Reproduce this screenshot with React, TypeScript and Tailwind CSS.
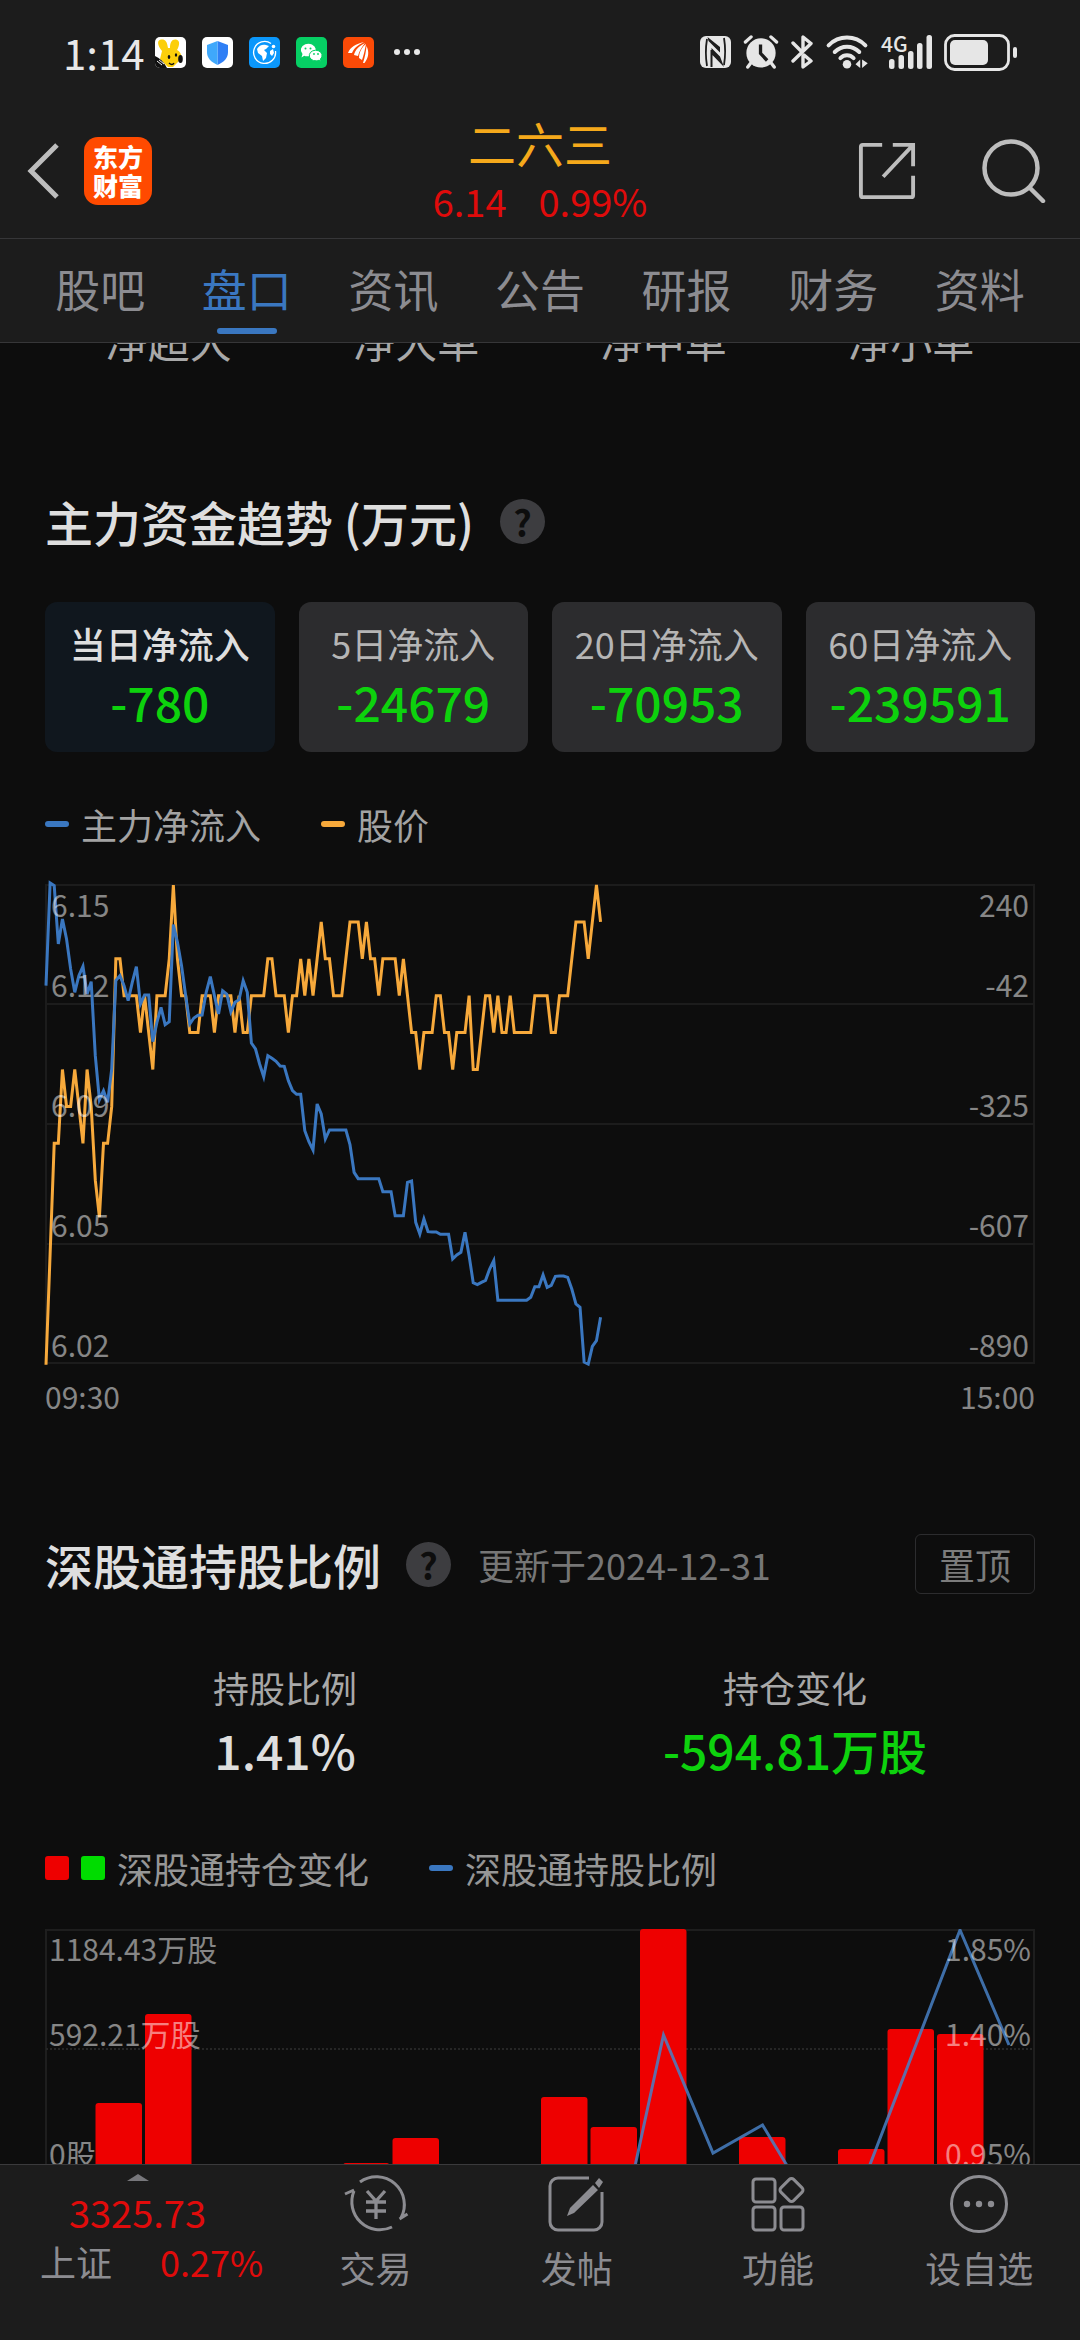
import type { ReactNode } from "react";

const tabs = ["股吧", "盘口", "资讯", "公告", "研报", "财务", "资料"];

const orderSizes = ["净超大", "净大单", "净中单", "净小单"];

const inflows = [
  { label: "当日净流入", value: "-780", active: true },
  { label: "5日净流入", value: "-24679", active: false },
  { label: "20日净流入", value: "-70953", active: false },
  { label: "60日净流入", value: "-239591", active: false },
];

// Minute prices, in cents below 6.15.
const priceTicks = [
  13, 10, 7, 7, 5, 6, 6, 5, 6, 7, 5, 6, 8, 9, 7, 7, 6, 2, 2, 3, 3, 3, 3, 4, 3, 4, 5, 3, 3, 3, 2, 0, 2, 3, 3, 4,
  4, 4, 3, 3, 3, 4, 3, 3, 3, 3, 4, 3, 4, 4, 3, 3, 3, 3, 2, 2, 3, 3, 3, 4, 3, 3, 2, 3, 2, 3, 2, 1, 2, 2, 3, 3, 3,
  2, 1, 1, 1, 2, 1, 2, 2, 3, 2, 2, 2, 2, 3, 2, 3, 4, 4, 5, 4, 4, 4, 3, 3, 4, 4, 5, 4, 4, 4, 3, 5, 5, 4, 3, 3, 4,
  3, 4, 4, 3, 4, 4, 4, 4, 4, 3, 3, 3, 3, 4, 4, 3, 3, 3, 2, 1, 1, 1, 2, 1, 0, 1,
];

// Minute main-force flow, on a scale whose range is 75 (240) to 1515 (-890).
const flowTicks = [
  380, 72, 80, 255, 180, 240, 330, 400, 350, 322, 405, 368, 590, 722, 695, 730, 630, 365, 350, 380, 425, 370, 323,
  435, 408, 408, 548, 490, 445, 497, 488, 197, 250, 320, 410, 495, 477, 469, 468, 400, 353, 410, 465, 395, 405, 458,
  430, 422, 365, 400, 552, 570, 615, 653, 590, 598, 607, 621, 622, 665, 695, 706, 706, 815, 848, 873, 735, 765, 840,
  813, 813, 813, 813, 813, 857, 940, 959, 959, 959, 959, 959, 959, 998, 998, 998, 1070, 1070, 1070, 970, 966, 1090,
  1125, 1080, 1118, 1119, 1119, 1126, 1126, 1126, 1200, 1188, 1180, 1120, 1190, 1271, 1277, 1270, 1264, 1230, 1205,
  1324, 1324, 1324, 1324, 1324, 1324, 1324, 1324, 1315, 1283, 1283, 1248, 1285, 1279, 1252, 1251, 1251, 1255, 1290,
  1335, 1345, 1509, 1515, 1462, 1445, 1375,
];

const minuteStep = 990 / 241;
const pricePoints = priceTicks.map((t, i) => `${i * minuteStep + 1},${t * 36.9 + 1}`).join(" ");
const flowPoints = flowTicks.map((t, i) => `${i * minuteStep + 1},${t / 3 - 25}`).join(" ");

const holdingBars = [
  { slot: 1, top: 174 },
  { slot: 2, top: 85 },
  { slot: 6, top: 234 },
  { slot: 7, top: 209 },
  { slot: 10, top: 168 },
  { slot: 11, top: 198 },
  { slot: 12, top: 0 },
  { slot: 14, top: 208 },
  { slot: 16, top: 220 },
  { slot: 17, top: 100 },
  { slot: 18, top: 105 },
];

function StatusIcons() {
  return (
    <div className="flex items-center gap-4">
      <svg className="size-[31px]" viewBox="0 0 31 31" aria-hidden="true">
        <clipPath id="tile">
          <rect width="31" height="31" rx="5" />
        </clipPath>
        <g clipPath="url(#tile)">
          <rect width="31" height="31" fill="#fff" />
          <path d="M7 14C2 8 2 3 6 2.500S12 4 13 11h2c0-6 2-9 6-8.500S25 8 22 13c4 2 5 6 4 9l-8 8h-5L5 22Z" fill="#fccf0b" />
          <path d="M0 19c5 2 9 6 12 12H0Z" fill="#111" />
          <path d="M2 24l5 4M4 23l5 4" stroke="#eee" strokeWidth="1" />
          <ellipse cx="25.500" cy="22" rx="2.300" ry="4" fill="#111" />
          <ellipse cx="14" cy="20" rx="1.300" ry="1.900" fill="#111" />
          <ellipse cx="21" cy="18" rx="1.200" ry="1.700" fill="#111" />
          <path d="M14 26c2 2 4 2 5 0" stroke="#111" strokeWidth="1.300" fill="none" />
        </g>
      </svg>
      <svg className="size-[31px]" viewBox="0 0 31 31" aria-hidden="true">
        <rect width="31" height="31" rx="5" fill="#fff" />
        <path d="M15.500 4l10.500 4v7c0 6-4 10-10.500 13Z" fill="#2f7ff5" />
        <path d="M15.500 4L5 8v7c0 6 4 10 10.500 13Z" fill="#3fa8fb" />
      </svg>
      <svg className="size-[31px]" viewBox="0 0 31 31" aria-hidden="true">
        <rect width="31" height="31" rx="5" fill="#0b97fb" />
        <path d="M22 6.500A11 11 0 1 0 26.500 14" fill="none" stroke="#fff" strokeWidth="1.300" />
        <path d="M8 12c2-4 6-5 9-4l3 1-3 3-2 1 3 3-1 5-3 3-1-5-4-3Z" fill="#fff" />
        <path d="M21 14l3-2 1 4-2 3-2-2Z" fill="#fff" />
        <circle cx="24.500" cy="9.500" r="1.800" fill="#fff" />
      </svg>
      <svg className="size-[31px]" viewBox="0 0 31 31" aria-hidden="true">
        <rect width="31" height="31" rx="5" fill="#06cf64" />
        <path d="M5.500 20.500l1-3.500a7.500 6.300 0 1 1 5 2.300c-1.500 0-2.500-.3-3.300-.6Z" fill="#fff" />
        <path d="M25 24.500l-.6-2.400a6.400 5.300 0 1 0-4 1.700c1.200 0 2-.2 2.700-.6Z" fill="#fff" stroke="#06cf64" strokeWidth="1" />
        <circle cx="9.500" cy="11.500" r="1" fill="#06cf64" />
        <circle cx="14.500" cy="11.500" r="1" fill="#06cf64" />
        <circle cx="18" cy="17" r=".9" fill="#06cf64" />
        <circle cx="22" cy="17" r=".9" fill="#06cf64" />
      </svg>
      <svg className="size-[31px]" viewBox="0 0 31 31" aria-hidden="true">
        <rect width="31" height="31" rx="5" fill="#fa4a07" />
        <path d="M5 16C7 10 13 7 21 5 15 8 11 11 9 16Z" fill="#fff" />
        <path d="M11 18c1-5 5-9 11-12-3 4-6 8-7 13Z" fill="#fff" />
        <path d="M16 21c0-6 3-11 7-14-1 5-2 10-4 16Z" fill="#fff" />
        <path d="M20 26c2-6 3-12 3.500-17 3 6 2 12-2 17Z" fill="#fff" />
      </svg>
      <svg className="ml-1 h-2 w-[28px]" viewBox="0 0 28 8" fill="#e8e8e8" aria-hidden="true">
        <circle cx="3" cy="4" r="3" />
        <circle cx="13" cy="4" r="3" />
        <circle cx="23" cy="4" r="3" />
      </svg>
    </div>
  );
}

function SystemIcons() {
  return (
    <div className="flex items-center gap-3 text-[#e6e6e6]">
      <svg className="h-8 w-[31px]" viewBox="0 0 31 32" aria-hidden="true">
        <rect width="31" height="32" rx="6" fill="currentColor" />
        <path d="M7 3c-1.500 9-1.500 18 0 27M24 2c1.500 9 1.500 18 0 27" stroke="#1c1c1c" strokeWidth="1.800" fill="none" />
        <path d="M7.500 1L20 11V16.500L8.500 5ZM11.500 12L20 20.500 24 31 11.500 18ZM10.500 14h2v17h-2Z" fill="#1c1c1c" />
      </svg>
      <svg className="h-[34px] w-9" viewBox="0 0 36 36" aria-hidden="true">
        <circle cx="18" cy="19" r="15.500" fill="currentColor" />
        <path d="M1.500 7.500l6-5.500M34.500 7.500l-6-5.500M7 30l-3 4M29 30l3 4" stroke="currentColor" strokeWidth="3.500" strokeLinecap="round" />
        <path d="M17.500 10v9.500l7 7.500" stroke="#1c1c1c" strokeWidth="3.500" fill="none" />
      </svg>
      <svg className="h-[34px] w-[22px]" viewBox="0 0 22 34" fill="none" stroke="currentColor" strokeWidth="3.400" strokeLinecap="round" strokeLinejoin="round" aria-hidden="true">
        <path d="M2 8l9 9M2 26l18-17.500L12 2v12M12 21v11l8-6-7-6" />
      </svg>
      <svg className="h-[34px] w-11" viewBox="0 0 44 36" fill="none" stroke="currentColor" strokeWidth="4.200" strokeLinecap="round" aria-hidden="true">
        <path d="M2.500 11c11-11 28-11 39 0M9 18c7.500-7.500 18.500-7.500 26 0M15 24.500c4-4 10-4 14 0" />
        <circle cx="22" cy="31" r="4.500" fill="currentColor" stroke="none" />
        <path d="M36 26v9l-5-4ZM38 35v-9l6 4Z" fill="currentColor" stroke="none" />
      </svg>
      <div className="relative h-[34px] w-[51px]">
        <span className="absolute top-0 left-0 text-[21px] leading-[16px] font-medium">4G</span>
        <svg className="size-full" viewBox="0 0 51 34" fill="currentColor" aria-hidden="true">
          <rect x="8" y="24" width="5.500" height="10" rx="2.500" />
          <rect x="17.500" y="20" width="5.500" height="14" rx="2.500" />
          <rect x="27" y="16" width="5.500" height="18" rx="2.500" />
          <rect x="36" y="8" width="5.500" height="26" rx="2.500" />
          <rect x="45.500" y="0" width="5.500" height="34" rx="2.500" />
        </svg>
      </div>
      <svg className="h-[37px] w-[73px]" viewBox="0 0 73 37" aria-hidden="true">
        <rect x="1.500" y="1.500" width="63" height="34" rx="9" fill="none" stroke="currentColor" strokeWidth="2.800" />
        <rect x="6" y="6" width="38" height="25" rx="5" fill="currentColor" />
        <rect x="69" y="13" width="4" height="11" rx="2" fill="currentColor" />
      </svg>
    </div>
  );
}

function Help({ label }: { label: string }) {
  return (
    <button aria-label={label} className="flex size-[45px] items-center justify-center rounded-full bg-[#3d3d40] text-[36px] leading-[45px] font-bold text-[#0d0d0d]">
      ?
    </button>
  );
}

function Dash({ className }: { className: string }) {
  return <span className={`h-[6px] w-6 rounded-[3px] ${className}`} />;
}

function NavItem({ label, children }: { label: string; children: ReactNode }) {
  return (
    <button className="flex flex-1 flex-col items-center pt-[9px] text-[#8c8c91]">
      <svg className="h-[60px] w-[66px]" viewBox="0 0 66 60" fill="none" stroke="currentColor" strokeWidth="3" aria-hidden="true">
        {children}
      </svg>
      <span className="mt-[6px] text-[36px] leading-[54px]">{label}</span>
    </button>
  );
}

function Header() {
  return (
    <header className="shrink-0 bg-[#1c1c1c]">
      <div className="flex h-[104px] items-center justify-between pr-[63px] pl-[63px]">
        <div className="flex items-center gap-[10px]">
          <span className="text-[42px] leading-[60px] text-[#e8e8e8]">1:14</span>
          <StatusIcons />
        </div>
        <SystemIcons />
      </div>
      <div className="grid h-[135px] grid-cols-[1fr_auto_1fr] items-center border-b border-[#363638] px-[26px]">
        <div className="flex items-center gap-6">
          <button aria-label="返回">
            <svg className="h-[56px] w-[34px]" viewBox="0 0 34 56" fill="none" stroke="#bdbdbd" strokeWidth="5" aria-hidden="true">
              <path d="M31 2L5 28l26 26" />
            </svg>
          </button>
          <a href="#home" className="flex size-[68px] flex-col items-center justify-center rounded-[14px] bg-[#ff4a00] text-[25px] leading-[29px] font-black text-white">
            <span>东方</span>
            <span>财富</span>
          </a>
        </div>
        <div className="flex flex-col items-center">
          <h1 className="text-[48px] leading-[60px] text-[#f5a91b]">二六三</h1>
          <div className="flex gap-8 text-[38px] leading-[58px] text-[#e00b0b]">
            <span>6.14</span>
            <span>0.99%</span>
          </div>
        </div>
        <div className="flex items-center justify-end gap-[65px] pr-2">
          <button aria-label="分享">
            <svg className="h-[58px] w-[60px]" viewBox="0 0 60 60" fill="none" stroke="#bdbdbd" strokeWidth="4" aria-hidden="true">
              <path d="M25 3H5a2 2 0 0 0-2 2v50a2 2 0 0 0 2 2h50a2 2 0 0 0 2-2V35M36 3h21v22M57 3L26 36" />
            </svg>
          </button>
          <button aria-label="搜索">
            <svg className="size-[64px]" viewBox="0 0 64 64" fill="none" stroke="#bdbdbd" strokeWidth="4.500" strokeLinecap="round" aria-hidden="true">
              <circle cx="29" cy="29" r="26.500" />
              <path d="M48 49l13 13" />
            </svg>
          </button>
        </div>
      </div>
      <nav className="flex h-[104px] border-b border-[#363638] px-[27px]">
        {tabs.map((tab) => (
          <a
            key={tab}
            href={`#${tab}`}
            className={`flex flex-1 flex-col items-center pt-[18px] text-[45px] leading-[64px] ${tab === "盘口" ? "text-[#3a77c0]" : "text-[#8c8c91]"}`}
          >
            {tab}
            {tab === "盘口" && <span className="mt-[7px] h-[6px] w-[60px] rounded-[3px] bg-[#3a77c0]" />}
          </a>
        ))}
      </nav>
    </header>
  );
}

function TrendSection() {
  return (
    <section className="mt-[115px] px-[45px]">
      <div className="flex h-[72px] items-center gap-[26px]">
        <h2 className="text-[48px] leading-[70px] font-medium text-[#dedede]">主力资金趋势 (万元)</h2>
        <Help label="主力资金趋势说明" />
      </div>
      <div className="mt-[45px] grid grid-cols-4 gap-6">
        {inflows.map((item) => (
          <button
            key={item.label}
            className={`flex h-[150px] flex-col items-center rounded-xl pt-[14px] ${item.active ? "bg-[#10171e]" : "bg-[#2c2c2e]"}`}
          >
            <span className={`text-[36px] leading-[54px] ${item.active ? "font-medium text-[#dedede]" : "text-[#b5b5b5]"}`}>{item.label}</span>
            <span className="text-[48px] leading-[62px] font-medium text-[#0dd20d]">{item.value}</span>
          </button>
        ))}
      </div>
      <div className="mt-[45px] flex items-center text-[36px] leading-[54px] text-[#a3a3a3]">
        <Dash className="bg-[#3a77c0]" />
        <span className="ml-3">主力净流入</span>
        <Dash className="ml-[60px] bg-[#f7a93b]" />
        <span className="ml-3">股价</span>
      </div>
      <div className="relative mt-[33px] h-[480px]">
        <svg className="size-full overflow-visible" viewBox="0 0 990 480" preserveAspectRatio="none" fill="none" aria-hidden="true">
          <path d="M1 1H989V479H1ZM1 120H989M1 240H989M1 360H989" stroke="#1c1c1c" strokeWidth="2" />
          <polyline points={pricePoints} stroke="#f7a93b" strokeWidth="3" />
          <polyline points={flowPoints} stroke="#3a77c0" strokeWidth="3" />
        </svg>
        <div className="absolute inset-0 grid grid-rows-4 px-[6px] text-[30px] leading-10 text-white/50">
          <div className="flex flex-col justify-between">
            <div className="flex justify-between"><span>6.15</span><span>240</span></div>
            <div className="flex justify-between"><span>6.12</span><span>-42</span></div>
          </div>
          <div className="flex items-end justify-between"><span>6.09</span><span>-325</span></div>
          <div className="flex items-end justify-between"><span>6.05</span><span>-607</span></div>
          <div className="flex items-end justify-between"><span>6.02</span><span>-890</span></div>
        </div>
      </div>
      <div className="mt-3 flex justify-between text-[30px] leading-10 text-[#868686]">
        <span>09:30</span>
        <span>15:00</span>
      </div>
    </section>
  );
}

function HoldingSection() {
  return (
    <section className="mt-[112px] px-[45px]">
      <div className="flex h-[72px] items-center">
        <h2 className="text-[48px] leading-[70px] font-medium text-[#dedede]">深股通持股比例</h2>
        <div className="ml-[25px] flex"><Help label="深股通持股比例说明" /></div>
        <span className="ml-[27px] text-[36px] leading-[52px] text-[#767676]">更新于2024-12-31</span>
        <button className="ml-auto h-[60px] w-[120px] rounded-md border border-[#2c2c2e] text-[36px] leading-[52px] text-[#7c7c7c]">置顶</button>
      </div>
      <dl className="-mx-[15px] mt-[60px] grid grid-cols-2 text-center">
        <div>
          <dt className="text-[36px] leading-[54px] text-[#a8a8a8]">持股比例</dt>
          <dd className="text-[48px] leading-[70px] font-medium text-[#dedede]">1.41%</dd>
        </div>
        <div>
          <dt className="text-[36px] leading-[54px] text-[#a8a8a8]">持仓变化</dt>
          <dd className="text-[48px] leading-[70px] font-medium text-[#0dd20d]">-594.81万股</dd>
        </div>
      </dl>
      <div className="mt-[57px] flex items-center text-[36px] leading-[54px] text-[#969696]">
        <span className="size-6 rounded-[3px] bg-[#ee0000]" />
        <span className="ml-3 size-6 rounded-[3px] bg-[#00dc00]" />
        <span className="ml-3">深股通持仓变化</span>
        <Dash className="ml-[60px] bg-[#3a77c0]" />
        <span className="ml-3">深股通持股比例</span>
      </div>
      <div className="relative mt-[34px] h-[240px]">
        <svg className="size-full" viewBox="0 0 990 240" preserveAspectRatio="none" fill="none" aria-hidden="true">
          <path d="M1 240V1H989V240" stroke="#1e1e1e" strokeWidth="2" />
          <path d="M1 120H989" stroke="#262626" strokeWidth="2" strokeDasharray="2 2" />
          {holdingBars.map((bar) => (
            <rect key={bar.slot} x={bar.slot * 49.5 + 1} y={bar.top} width="46.500" height={260 - bar.top} rx="3" fill="#ee0000" />
          ))}
          <polyline points="569,334 618.500,106 668,224 717.500,196 767,278 816,259 915,1 964,116" stroke="#4880c4" strokeOpacity=".85" strokeWidth="3" />
        </svg>
        <div className="absolute inset-0 grid grid-rows-2 px-1 text-[30px] leading-8 text-white/50">
          <div className="flex flex-col justify-between pt-[3px]">
            <div className="flex justify-between"><span>1184.43万股</span><span>1.85%</span></div>
            <div className="flex justify-between"><span>592.21万股</span><span>1.40%</span></div>
          </div>
          <div className="flex items-end justify-between"><span>0股</span><span>0.95%</span></div>
        </div>
      </div>
    </section>
  );
}

function Footer() {
  return (
    <footer className="flex h-[176px] shrink-0 border-t border-[#3a3a3c] bg-[#1c1c1c]">
      <button className="flex w-[275px] flex-col items-center justify-start pt-[9px]">
        <svg className="h-[7px] w-[22px]" viewBox="0 0 22 7" fill="#77777b" aria-hidden="true">
          <path d="M11 0l11 7H0Z" />
        </svg>
        <span className="mt-1 text-[38px] leading-[54px] text-[#e00b0b]">3325.73</span>
        <span className="flex gap-12 pl-7 text-[36px] leading-[44px]">
          <span className="text-[#8c8c91]">上证</span>
          <span className="text-[#e00b0b]">0.27%</span>
        </span>
      </button>
      <nav className="flex flex-1">
        <NavItem label="交易">
          <path d="M17 8A28 28 0 0 1 58 44M56.500 45l8-5M49 53A28 28 0 0 1 11 17M11 16l-9 4" strokeLinejoin="round" />
          <path d="M24 17l9 10 9-10M33 27v18M23 28h20M23 37h20" strokeWidth="3.300" />
        </NavItem>
        <NavItem label="发帖">
          <path d="M45 4H14a8 8 0 0 0-8 8v36a8 8 0 0 0 8 8h36a8 8 0 0 0 8-8V18" />
          <path d="M49 11l5 5-24 23-7 3 3-8ZM51 9l4-5 4 4-4 6Z" fill="currentColor" stroke="none" />
        </NavItem>
        <NavItem label="功能">
          <rect x="8" y="5" width="22" height="23" rx="3" />
          <rect x="8" y="33" width="22" height="23" rx="3" />
          <rect x="36" y="33" width="22" height="23" rx="3" />
          <rect x="37.500" y="7" width="18" height="18" rx="3" transform="rotate(45 46.500 16)" />
        </NavItem>
        <NavItem label="设自选">
          <circle cx="33" cy="30" r="27.500" />
          <g fill="currentColor" stroke="none">
            <circle cx="21" cy="30" r="3.200" />
            <circle cx="33" cy="30" r="3.200" />
            <circle cx="45" cy="30" r="3.200" />
          </g>
        </NavItem>
      </nav>
    </footer>
  );
}

export default function App() {
  return (
    <div className="flex h-screen flex-col overflow-hidden bg-[#0d0d0d] font-['Noto_Sans_CJK_SC',sans-serif]">
      <Header />
      <main className="min-h-0 flex-1 overflow-hidden">
        <div className="-mt-[33px] grid grid-cols-4 px-[45px] text-center text-[42px] leading-[60px] text-[#a8a8a8]">
          {orderSizes.map((size) => (
            <span key={size}>{size}</span>
          ))}
        </div>
        <TrendSection />
        <HoldingSection />
      </main>
      <Footer />
    </div>
  );
}
